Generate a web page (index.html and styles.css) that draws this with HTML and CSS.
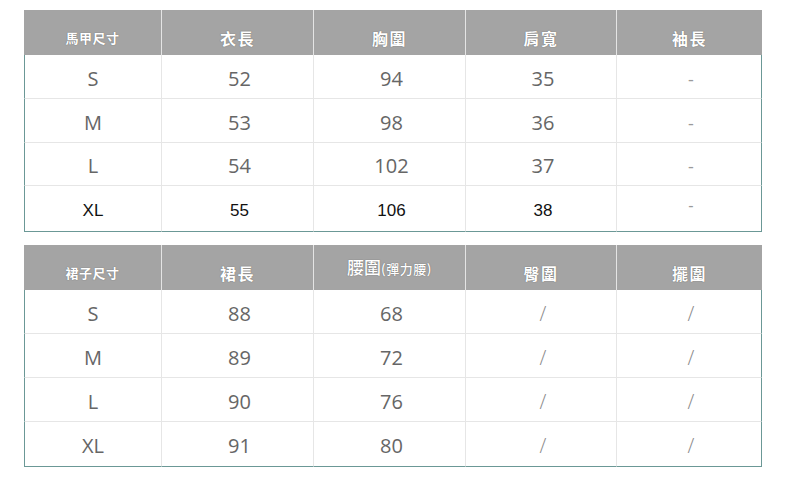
FILE: index.html
```html
<!DOCTYPE html>
<html lang="zh-Hant">
<head>
<meta charset="utf-8">
<link rel="stylesheet" href="styles.css">
</head>
<body>
<div class="wrap">
  <table class="size t1">
    <colgroup><col class="c1"><col class="c2"><col class="c3"><col class="c4"><col class="c5"></colgroup>
    <thead>
      <tr><th class="small">馬甲尺寸</th><th>衣長</th><th>胸圍</th><th>肩寬</th><th>袖長</th></tr>
    </thead>
    <tbody>
      <tr class="r44"><td>S</td><td>52</td><td>94</td><td>35</td><td class="na">-</td></tr>
      <tr class="r44"><td>M</td><td>53</td><td>98</td><td>36</td><td class="na">-</td></tr>
      <tr class="r43"><td>L</td><td>54</td><td>102</td><td>37</td><td class="na">-</td></tr>
      <tr class="r46 alt"><td>XL</td><td>55</td><td>106</td><td>38</td><td class="na">-</td></tr>
    </tbody>
  </table>
  <table class="size t2">
    <colgroup><col class="c1"><col class="c2"><col class="c3"><col class="c4"><col class="c5"></colgroup>
    <thead>
      <tr><th class="small">裙子尺寸</th><th>裙長</th><th class="waist">腰圍<span>(彈力腰)</span></th><th>臀圍</th><th>擺圍</th></tr>
    </thead>
    <tbody>
      <tr class="r44"><td>S</td><td>88</td><td>68</td><td class="na sl">/</td><td class="na sl">/</td></tr>
      <tr class="r44"><td>M</td><td>89</td><td>72</td><td class="na sl">/</td><td class="na sl">/</td></tr>
      <tr class="r44"><td>L</td><td>90</td><td>76</td><td class="na sl">/</td><td class="na sl">/</td></tr>
      <tr class="r45"><td>XL</td><td>91</td><td>80</td><td class="na sl">/</td><td class="na sl">/</td></tr>
    </tbody>
  </table>
</div>
</body>
</html>
```

FILE: styles.css
```css
html, body {
  margin: 0;
  padding: 0;
  background: #ffffff;
}

.wrap {
  padding: 10px 0 0 24px;
}

.size {
  width: 738px;
  table-layout: fixed;
  border-collapse: separate;
  border-spacing: 0;
  margin-bottom: 13px;
}

.c1 { width: 138px; }
.c2 { width: 152px; }
.c3 { width: 152px; }
.c4 { width: 151px; }
.c5 { width: 145px; }

.size th {
  height: 45px;
  box-sizing: border-box;
  padding: 10px 0 0 0;
  background: #a4a4a4;
  color: #ffffff;
  font-family: "Noto Sans CJK TC", "Noto Sans", sans-serif;
  font-size: 16px;
  font-weight: 700;
  letter-spacing: 1.5px;
  text-align: center;
  vertical-align: middle;
  text-shadow: 0 0 1px rgba(50, 50, 50, 0.7);
  border-right: 1px solid #e4e4e4;
  line-height: 20px;
}

.size th:last-child {
  border-right: none;
}

.size th.small {
  font-size: 13px;
  letter-spacing: 0.5px;
}

.size th.waist {
  padding-top: 0;
  font-size: 17px;
  font-weight: 500;
  letter-spacing: 0;
}

.size th.waist span {
  font-size: 13px;
  letter-spacing: 0.5px;
}

.size td {
  box-sizing: border-box;
  padding: 4px 0 0 4px;
  text-align: center;
  vertical-align: middle;
  font-family: "Open Sans", "Noto Sans", sans-serif;
  font-size: 20px;
  color: #666666;
  border-right: 1px solid #e6e6e6;
  border-bottom: 1px solid #e6e6e6;
  line-height: 24px;
}

.size td:first-child {
  padding-left: 0;
  border-left: 1px solid #6b9896;
}

.size td:last-child {
  border-right: 1px solid #6b9896;
}

.size tbody tr:last-child td {
  border-bottom: 1px solid #6b9896;
}

.size td.na {
  color: #9a9a9a;
  font-size: 18px;
}

.size td.sl {
  font-size: 20px;
  font-weight: 300;
  color: #8a8a8a;
}

.r43 td { height: 43px; }
.r44 td { height: 44px; }
.r45 td { height: 45px; }
.r46 td { height: 46px; }

.alt td {
  font-family: "Liberation Sans", Arial, sans-serif;
  font-size: 17px;
  color: #111111;
  padding-top: 4px;
}

.alt td.na {
  color: #9a9a9a;
  font-size: 16px;
  padding-top: 0;
  padding-bottom: 6px;
}
```
